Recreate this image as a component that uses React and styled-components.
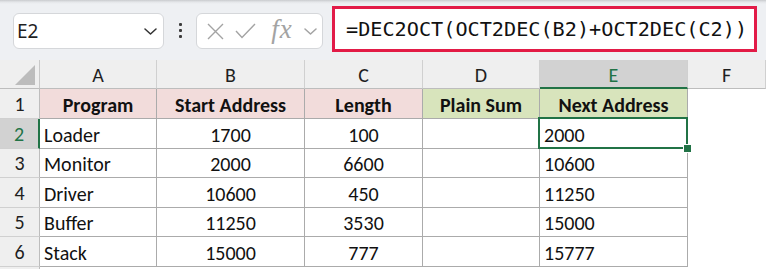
import React from 'react';
import styled, { createGlobalStyle, css } from 'styled-components';

const GlobalStyle = createGlobalStyle`
  html, body {
    margin: 0;
    padding: 0;
    background: #ffffff;
    overflow: hidden;
  }
  body {
    width: 766px;
    height: 269px;
  }
`;

const CELL_FONT = `Carlito, Lato, 'Liberation Sans', sans-serif`;
const GREEN = '#217346';

const COLUMNS = ['A', 'B', 'C', 'D', 'E', 'F'];
const HEADERS = [
  { text: 'Program', fill: 'pink' },
  { text: 'Start Address', fill: 'pink' },
  { text: 'Length', fill: 'pink' },
  { text: 'Plain Sum', fill: 'green' },
  { text: 'Next Address', fill: 'green' },
];
const ROWS = [
  ['Loader', '1700', '100', '', '2000'],
  ['Monitor', '2000', '6600', '', '10600'],
  ['Driver', '10600', '450', '', '11250'],
  ['Buffer', '11250', '3530', '', '15000'],
  ['Stack', '15000', '777', '', '15777'],
];
const ALIGN = ['left', 'center', 'center', 'left', 'left'];
const ROW_HEIGHTS = [30, 30, 29, 30, 29, 30];

const Chevron = ({ color = '#333', width = 13 }) => (
  <svg width={width} height="7" viewBox="0 0 13 7">
    <polyline
      points="1,1 6.5,6 12,1"
      fill="none"
      stroke={color}
      strokeWidth="1.5"
      strokeLinecap="round"
      strokeLinejoin="round"
    />
  </svg>
);

const App = () => {
  return (
    <>
      <GlobalStyle />
      <Page>
        <Toolbar>
          <NameBox>
            <NameText>E2</NameText>
            <Chevron />
          </NameBox>
          <Grip>
            <span />
            <span />
            <span />
          </Grip>
          <FuncBox>
            <svg width="17" height="17" viewBox="0 0 17 17">
              <path d="M1 1 L16 16 M16 1 L1 16" stroke="#a3a3a3" strokeWidth="1.4" fill="none" />
            </svg>
            <svg width="21" height="16" viewBox="0 0 21 16">
              <polyline points="1,8 7,14.5 20,1" stroke="#a3a3a3" strokeWidth="1.4" fill="none" />
            </svg>
            <Fx>fx</Fx>
            <Chevron color="#a3a3a3" />
          </FuncBox>
          <FormulaBox>=DEC2OCT(OCT2DEC(B2)+OCT2DEC(C2))</FormulaBox>
        </Toolbar>

        <Sheet>
          <Corner>
            <CornerMark />
          </Corner>
          {COLUMNS.map((c) => (
            <ColHeader key={c} $active={c === 'E'}>
              {c}
            </ColHeader>
          ))}
          <ColHeader $blank />

          <RowHeader $h={ROW_HEIGHTS[0]}>1</RowHeader>
          {HEADERS.map((h) => (
            <Cell key={h.text} $fill={h.fill} $bold $align="center" $boxed>
              {h.text}
            </Cell>
          ))}
          <Cell />
          <Cell />

          {ROWS.map((row, r) => (
            <React.Fragment key={r}>
              <RowHeader $h={ROW_HEIGHTS[r + 1]} $active={r === 0}>
                {r + 2}
              </RowHeader>
              {row.map((v, i) => (
                <Cell key={i} $align={ALIGN[i]} $boxed $selected={r === 0 && i === 4}>
                  {v}
                  {r === 0 && i === 4 && (
                    <Selection>
                      <Handle />
                    </Selection>
                  )}
                </Cell>
              ))}
              <Cell />
              <Cell />
            </React.Fragment>
          ))}

          <RowHeader $h={10} />
          <Cell />
        </Sheet>
      </Page>
    </>
  );
};

const Page = styled.div`
  width: 766px;
  height: 269px;
  overflow: hidden;
  background: #ffffff;
`;

const Toolbar = styled.div`
  height: 60px;
  box-sizing: border-box;
  display: flex;
  align-items: flex-start;
  padding: 6px 0 0 13px;
  background: linear-gradient(to bottom, #c9cbce 0px, #e4e6e9 2px, #eef0f3 4px);
`;

const boxBase = css`
  box-sizing: border-box;
  height: 36px;
  margin-top: 7px;
  background: #ffffff;
  border: 1px solid #d5d7da;
  border-radius: 6px;
  display: flex;
  align-items: center;
`;

const NameBox = styled.div`
  ${boxBase};
  width: 151px;
  padding: 0 6px 0 3px;
  justify-content: space-between;
`;

const NameText = styled.span`
  font-family: 'Noto Sans', 'Open Sans', sans-serif;
  font-size: 19px;
  color: #1f1f1f;
  line-height: 1;
`;

const Grip = styled.div`
  width: 32px;
  height: 48px;
  display: flex;
  flex-direction: column;
  align-items: center;
  justify-content: center;
  gap: 3px;

  span {
    width: 3px;
    height: 3px;
    border-radius: 1px;
    background: #3c3c3c;
  }
`;

const FuncBox = styled.div`
  ${boxBase};
  width: 127px;
  padding: 0 5px 0 10px;
  gap: 0;
  justify-content: space-between;
`;

const Fx = styled.span`
  font-family: 'Liberation Serif', 'DejaVu Serif', serif;
  font-style: italic;
  font-size: 27px;
  letter-spacing: 1px;
  color: #a3a3a3;
  line-height: 1;
  margin: -4px 0 0 4px;
`;

const FormulaBox = styled.div`
  box-sizing: border-box;
  margin-left: 9px;
  width: 425px;
  height: 46px;
  border: 3px solid #e21b48;
  background: #ffffff;
  display: flex;
  align-items: center;
  padding-left: 11px;
  font-family: 'DejaVu Sans Mono', 'Liberation Mono', monospace;
  font-size: 20.2px;
  color: #111111;
  white-space: nowrap;
`;

const Sheet = styled.div`
  display: grid;
  grid-template-columns: 40px 117px 148px 118px 117px 148px 78px 1fr;
  grid-template-rows: 29px repeat(6, auto) 10px;
  font-family: ${CELL_FONT};
`;

const headerBase = css`
  box-sizing: border-box;
  background: #efefef;
  color: #1f1f1f;
  font-size: 20px;
  display: flex;
  align-items: center;
  justify-content: center;
`;

const Corner = styled.div`
  ${headerBase};
  position: relative;
  border-right: 1px solid #c8c8c8;
  border-bottom: 1px solid #bdbdbd;
`;

const CornerMark = styled.div`
  position: absolute;
  right: 4px;
  bottom: 3px;
  width: 0;
  height: 0;
  border-style: solid;
  border-width: 0 0 20px 20px;
  border-color: transparent transparent #bcbcbc transparent;
`;

const ColHeader = styled.div`
  ${headerBase};
  padding-top: 2px;
  border-right: 1px solid ${({ $blank }) => ($blank ? 'transparent' : '#d0d0d0')};
  border-bottom: 1px solid #bdbdbd;
  ${({ $active }) =>
    $active &&
    css`
      background: #d2d2d2;
      color: ${GREEN};
      border-bottom: 2px solid ${GREEN};
    `}
`;

const RowHeader = styled.div`
  ${headerBase};
  height: ${({ $h }) => $h}px;
  border-right: 1px solid #bdbdbd;
  border-bottom: 1px solid #d0d0d0;
  ${({ $active }) =>
    $active &&
    css`
      background: #d2d2d2;
      color: ${GREEN};
      border-right: 2px solid ${GREEN};
    `}
`;

const FILLS = {
  pink: '#f2dcdb',
  green: '#d8e4bc',
};

const Cell = styled.div`
  box-sizing: border-box;
  position: relative;
  z-index: ${({ $selected }) => ($selected ? 2 : 'auto')};
  display: flex;
  align-items: center;
  padding: 2px 4px 0;
  font-size: 20px;
  color: #111111;
  white-space: nowrap;
  background: ${({ $fill }) => FILLS[$fill] || '#ffffff'};
  font-weight: ${({ $bold }) => ($bold ? 700 : 400)};
  justify-content: ${({ $align }) => ($align === 'center' ? 'center' : 'flex-start')};
  ${({ $boxed }) =>
    $boxed &&
    css`
      border-right: 1px solid #ababab;
      border-bottom: 1px solid #ababab;
    `}
`;

const Selection = styled.div`
  position: absolute;
  left: -2px;
  top: -2px;
  right: -1px;
  bottom: -1px;
  border: 2px solid ${GREEN};
  pointer-events: none;
`;

const Handle = styled.div`
  position: absolute;
  right: -6px;
  bottom: -6px;
  width: 7px;
  height: 7px;
  background: ${GREEN};
  border: 1px solid #ffffff;
`;

export default App;
